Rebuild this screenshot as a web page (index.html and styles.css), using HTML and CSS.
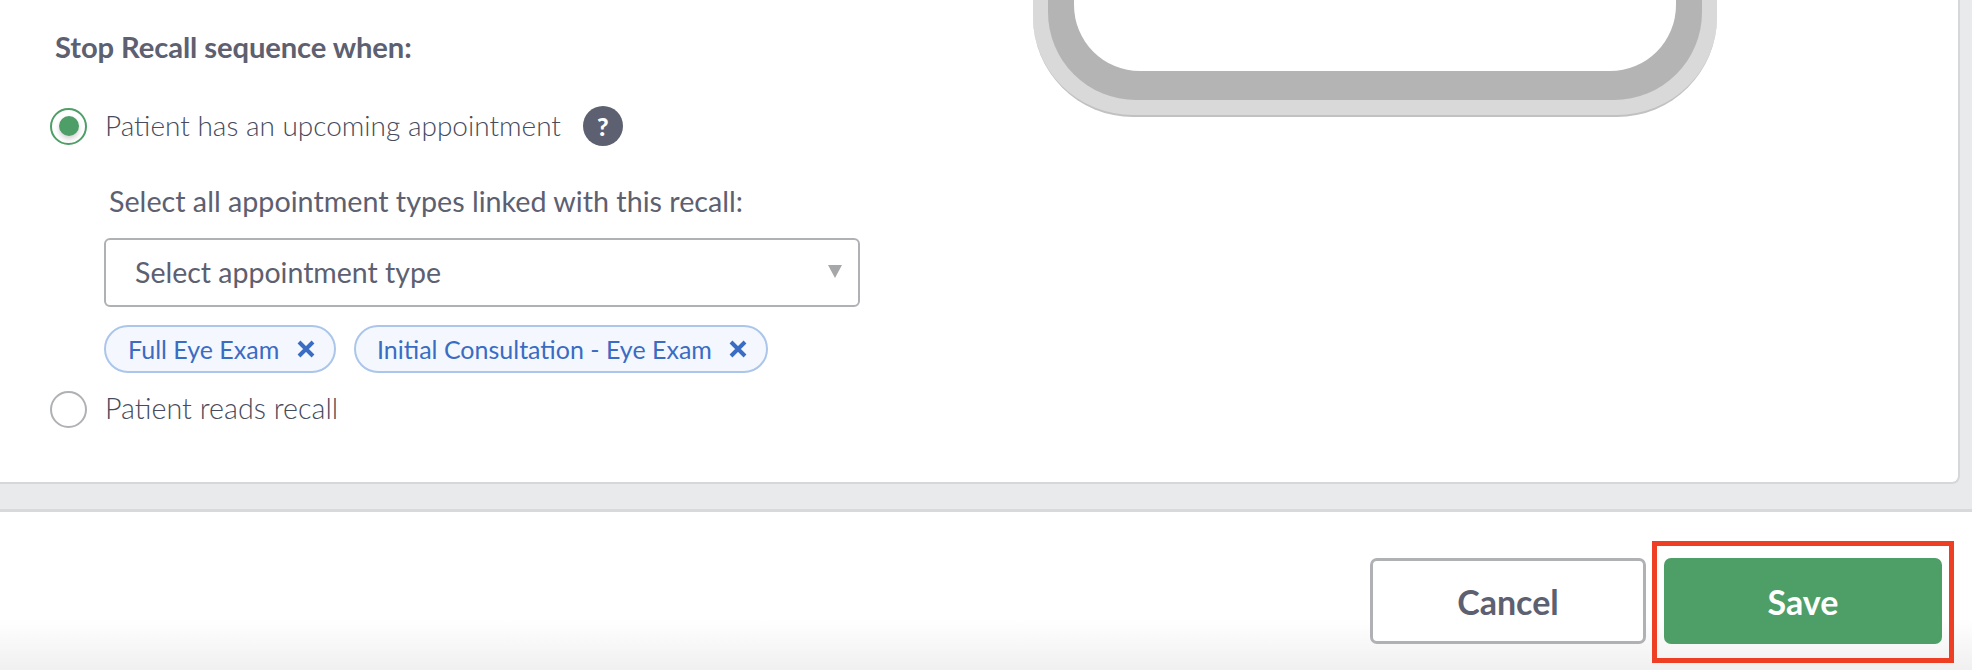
FILE: index.html
```html
<!DOCTYPE html>
<html lang="en">
<head>
<meta charset="utf-8">
<title>Recall settings</title>
<link rel="stylesheet" href="styles.css">
</head>
<body>
<main class="band">
  <section class="card">
    <form class="form">
      <h2 class="heading">Stop Recall sequence when:</h2>
      <div class="option option-first">
        <span class="radio radio-on"><span class="radio-dot"></span></span>
        <span class="option-text">Patient has an upcoming appointment</span>
        <span class="help">?</span>
      </div>
      <div class="types">Select all appointment types linked with this recall:</div>
      <div class="select">
        <span>Select appointment type</span>
        <svg class="caret" width="14" height="13" viewBox="0 0 14 13"><path d="M0 0H14L7 13Z" fill="#a6a7a9"/></svg>
      </div>
      <div class="tags">
        <span class="tag tag-one">Full Eye Exam
          <svg class="tag-x" width="20" height="20" viewBox="0 0 20 20"><path d="M3 3L17 17M17 3L3 17" stroke="#3a6cc4" stroke-width="4" fill="none"/></svg>
        </span>
        <span class="tag tag-two">Initial Consultation - Eye Exam
          <svg class="tag-x" width="20" height="20" viewBox="0 0 20 20"><path d="M3 3L17 17M17 3L3 17" stroke="#3a6cc4" stroke-width="4" fill="none"/></svg>
        </span>
      </div>
      <div class="option option-last">
        <span class="radio"></span>
        <span class="option-text">Patient reads recall</span>
      </div>
    </form>
    <div class="device-col">
      <div class="device-outer">
        <div class="device-ring">
          <div class="device-screen"></div>
        </div>
      </div>
    </div>
  </section>
</main>
<footer class="footer">
  <button class="btn btn-cancel" type="button">Cancel</button>
  <div class="highlight">
    <button class="btn btn-save" type="button">Save</button>
  </div>
</footer>
</body>
</html>
```
FILE: styles.css
```css
* { box-sizing: border-box; }
html, body { margin: 0; padding: 0; }
body {
  width: 1972px;
  height: 670px;
  overflow: hidden;
  background: #fff;
  font-family: Lato, "Open Sans", sans-serif;
  color: #5c6070;
}
.band {
  height: 512px;
  background: #e9eaec;
  border-bottom: 3px solid #d8d9db;
}
.card {
  width: 1960px;
  height: 484px;
  background: #fff;
  border-right: 2px solid #d6d7d9;
  border-bottom: 2px solid #d6d7d9;
  border-bottom-right-radius: 8px;
  display: flex;
  overflow: hidden;
}
.form {
  width: 1032px;
  flex: none;
  padding: 32px 0 0 50px;
}
.heading {
  margin: 0 0 0 5px;
  font-size: 29.2px;
  line-height: 30px;
  font-weight: 700;
  letter-spacing: -0.1px;
  color: #5c6070;
}
.option {
  display: flex;
  align-items: center;
  font-weight: 300;
  font-size: 28px;
  color: #474b5c;
}
.option-first { margin-top: 44px; height: 40px; }
.option-last { margin-top: 18px; height: 36px; font-size: 28.7px; }
.radio {
  width: 37px;
  height: 37px;
  flex: none;
  border-radius: 50%;
  border: 2px solid #b0b1b5;
  background: #fff;
  display: flex;
  align-items: center;
  justify-content: center;
}
.radio-on { border-color: #4e9e68; }
.radio-dot {
  width: 20px;
  height: 20px;
  border-radius: 50%;
  background: #4e9e68;
  box-shadow: 0 3px 5px rgba(0, 0, 0, 0.18);
}
.option-text { margin-left: 18px; padding-bottom: 2px; }
.help {
  width: 40px;
  height: 40px;
  margin-left: 22px;
  border-radius: 50%;
  background: #5c6070;
  color: #fff;
  font-weight: 900;
  font-size: 25px;
  display: flex;
  align-items: center;
  justify-content: center;
}
.types {
  margin: 40px 0 0 59px;
  font-size: 28.7px;
  line-height: 30px;
  font-weight: 400;
  color: #5c6070;
}
.select {
  width: 756px;
  height: 69px;
  margin: 22px 0 0 54px;
  padding: 0 16px 2px 29px;
  border: 2px solid #b0b1b5;
  border-radius: 6px;
  display: flex;
  align-items: center;
  justify-content: space-between;
  font-size: 28.5px;
  color: #5c6070;
}
.tags {
  margin: 18px 0 0 54px;
  display: flex;
  gap: 18px;
}
.tag {
  height: 48px;
  display: flex;
  align-items: center;
  justify-content: space-between;
  padding: 0 18px 0 22px;
  border: 2px solid #abc6ea;
  border-radius: 24px;
  background: #f4f8fe;
  color: #3a6cc4;
  font-size: 25px;
}
.tag-one { width: 232px; }
.tag-two { width: 414px; padding-left: 21px; }
.device-col {
  flex: none;
  width: 684px;
  height: 117px;
  margin-left: 1px;
}
.device-outer {
  height: 117px;
  padding: 0 15px 15px;
  background: #d8d9d8;
  border-bottom: 2px solid #c0c1c0;
  border-radius: 0 0 100px 100px;
}
.device-ring {
  height: 100px;
  padding: 0 26px 29px;
  background: #b3b4b3;
  border-radius: 0 0 88px 88px;
}
.device-screen {
  height: 71px;
  background: #fff;
  border-radius: 0 0 66px 66px;
}
.footer {
  height: 158px;
  padding: 0 18px 0 1370px;
  display: flex;
  align-items: flex-start;
  background: linear-gradient(to bottom, #fff 0, #fff 68%, #f0f0f0 100%);
}
.btn {
  font-family: inherit;
  font-size: 34px;
  font-weight: 700;
  height: 86px;
  border-radius: 7px;
  padding: 0;
}
.btn-cancel {
  width: 276px;
  margin-top: 46px;
  background: #fff;
  border: 3px solid #b0b1b5;
  color: #5c6070;
}
.highlight {
  margin: 29px 0 0 6px;
  width: 302px;
  height: 122px;
  padding: 12px 7px 0 7px;
  border: 5px solid #ee3e23;
}
.btn-save {
  width: 278px;
  background: #4e9e68;
  border: 0;
  color: #fff;
}
```
